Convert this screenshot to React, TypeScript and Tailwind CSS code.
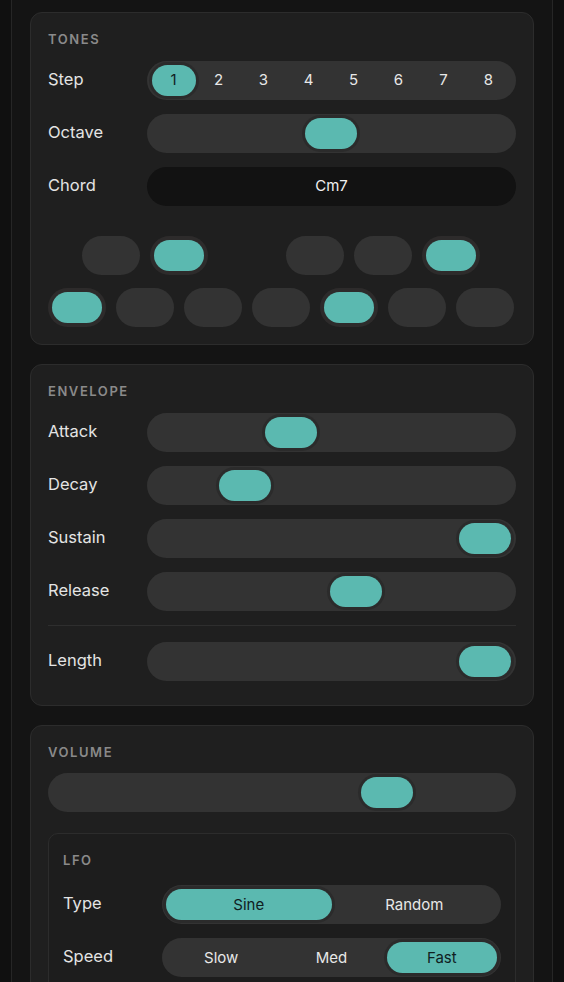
import React from "react"

const font = { fontFamily: "Inter, 'Noto Sans', sans-serif" }

function SectionTitle({ children }: { children: React.ReactNode }) {
  return (
    <p className="h-[18px] text-[13px] font-semibold uppercase leading-[18px] tracking-[0.12em] text-[#8a8a8a]">
      {children}
    </p>
  )
}

function Row({ label, children }: { label: string; children: React.ReactNode }) {
  return (
    <div className="flex items-center">
      <span className="-mt-[2px] w-[99px] shrink-0 text-[16.5px] text-[#e4e4e4]">{label}</span>
      <div className="flex-1">{children}</div>
    </div>
  )
}

function Slider({ left }: { left: number }) {
  return (
    <div className="relative h-[39px] rounded-full bg-[#333333]">
      <div
        className="absolute top-[4px] h-[31px] w-[52px] rounded-full bg-[#5bb9b0] ring-[3px] ring-[#2b2b2b]"
        style={{ left }}
      />
    </div>
  )
}

function Keys() {
  const black = [false, true, null, false, false, true, null]
  const white = [true, false, false, false, true, false, false]
  return (
    <div className="mt-[30px] flex flex-col gap-[13px]">
      <div className="ml-[34px] flex gap-[10px]">
        {black.map((on, i) =>
          on === null ? (
            <div key={i} className="h-[39px] w-[58px] shrink-0" />
          ) : (
            <Key key={i} on={on} />
          ),
        )}
      </div>
      <div className="flex gap-[10px]">
        {white.map((on, i) => (
          <Key key={i} on={on} />
        ))}
      </div>
    </div>
  )
}

function Key({ on }: { on: boolean }) {
  return on ? (
    <div className="flex h-[39px] w-[58px] shrink-0 items-center justify-center rounded-full bg-[#2d2b2b] p-[4px]">
      <div className="h-full w-full rounded-full bg-[#5bb9b0]" />
    </div>
  ) : (
    <div className="h-[39px] w-[58px] shrink-0 rounded-full bg-[#333333]" />
  )
}

function Segmented({ options, active }: { options: string[]; active: number }) {
  return (
    <div className="flex h-[39px] rounded-full bg-[#333333] p-[4px]">
      {options.map((o, i) => (
        <div
          key={o}
          className={
            i === active
              ? "flex flex-1 items-center justify-center rounded-full bg-[#5bb9b0] pt-[2px] text-[15px] text-[#10201f] ring-[3px] ring-[#2b2b2b]"
              : "flex flex-1 items-center justify-center pt-[2px] text-[15px] text-[#e8e8e8]"
          }
        >
          {o}
        </div>
      ))}
    </div>
  )
}

export default function App() {
  return (
    <div className="min-h-screen bg-[#101010]" style={font}>
      <div className="mx-[11px] flex min-h-screen flex-col gap-[19px] border-x border-[#262626] bg-[#141414] px-[18px] pt-3">
        {/* Tones */}
        <section className="rounded-[12px] border border-[#2c2c2c] bg-[#1f1f1f] px-[17px] pb-[17px] pt-[17px]">
          <SectionTitle>Tones</SectionTitle>
          <div className="mt-[13px] flex flex-col gap-[14px]">
            <Row label="Step">
              <div className="flex h-[39px] rounded-full bg-[#333333] p-[4px]">
                {[1, 2, 3, 4, 5, 6, 7, 8].map((n) => (
                  <div key={n} className="flex w-[45px] items-center justify-center">
                    {n === 1 ? (
                      <span className="flex h-[31px] w-[44px] items-center justify-center rounded-full bg-[#5bb9b0] text-[15px] text-[#10201f] ring-[3px] ring-[#2b2b2b]">
                        1
                      </span>
                    ) : (
                      <span className="text-[15px] text-[#e8e8e8]">{n}</span>
                    )}
                  </div>
                ))}
              </div>
            </Row>
            <Row label="Octave">
              <Slider left={158} />
            </Row>
            <Row label="Chord">
              <div className="flex h-[39px] items-center justify-center rounded-full bg-[#121212] text-[15px] text-[#f0f0f0]">
                Cm7
              </div>
            </Row>
          </div>
          <Keys />
        </section>

        {/* Envelope */}
        <section className="rounded-[12px] border border-[#2c2c2c] bg-[#1f1f1f] px-[17px] pb-[24px] pt-[17px]">
          <SectionTitle>Envelope</SectionTitle>
          <div className="mt-[13px] flex flex-col gap-[14px]">
            <Row label="Attack">
              <Slider left={118} />
            </Row>
            <Row label="Decay">
              <Slider left={72} />
            </Row>
            <Row label="Sustain">
              <Slider left={312} />
            </Row>
            <Row label="Release">
              <Slider left={183} />
            </Row>
          </div>
          <div className="mt-[14px] h-px bg-[#2e2e2e]" />
          <div className="mt-[16px]">
            <Row label="Length">
              <Slider left={312} />
            </Row>
          </div>
        </section>

        {/* Volume */}
        <section className="rounded-[12px] border border-[#2c2c2c] bg-[#1f1f1f] px-[17px] pb-[17px] pt-[17px]">
          <SectionTitle>Volume</SectionTitle>
          <div className="mt-[12px]">
            <Slider left={313} />
          </div>
          <div className="mt-[21px] rounded-[10px] border border-[#2c2c2c] bg-[#1d1d1d] px-[14px] pb-[16px] pt-[17px]">
            <SectionTitle>LFO</SectionTitle>
            <div className="mt-[16px] flex flex-col gap-[14px]">
              <Row label="Type">
                <Segmented options={["Sine", "Random"]} active={0} />
              </Row>
              <Row label="Speed">
                <Segmented options={["Slow", "Med", "Fast"]} active={2} />
              </Row>
            </div>
          </div>
        </section>
      </div>
    </div>
  )
}
